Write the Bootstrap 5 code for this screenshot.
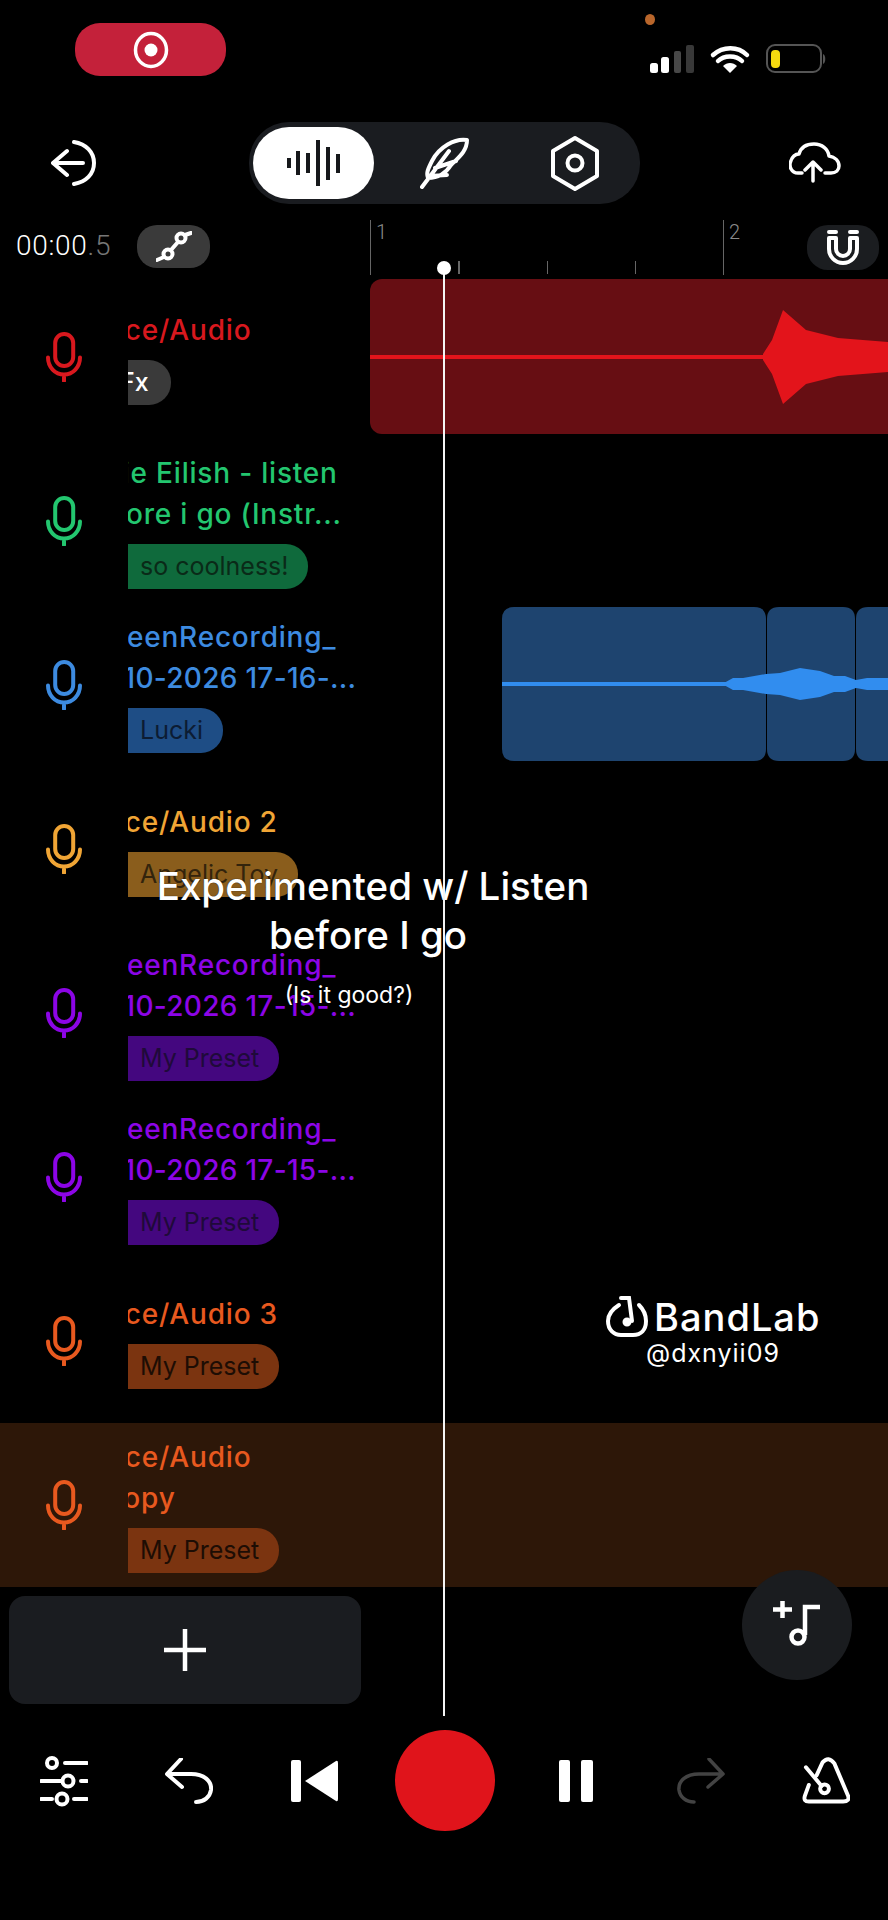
<!DOCTYPE html>
<html lang="en">
<head>
    <meta charset="UTF-8" />
    <title>BandLab Studio</title>
    <meta name="viewport" content="width=device-width, initial-scale=1" />
    <link href="https://cdn.jsdelivr.net/npm/bootstrap@5.3.0/dist/css/bootstrap.min.css" rel="stylesheet" />
    <style>
        body { background: #000; color: #fff; font-family: "Inter", "Liberation Sans", sans-serif; }
        .app { width: 888px; height: 1920px; overflow: hidden; background: #000; }
        svg { display: block; }
        .ico { fill: none; stroke: #fff; stroke-width: 4; stroke-linecap: round; stroke-linejoin: round; }

        /* status bar */
        .status-row { height: 122px; padding-left: 75px; padding-right: 61px; }
        .rec-pill { width: 151px; height: 53px; margin-top: 23px; background: #c4213a; border-radius: 25px; }
        .privacy-dot { width: 10px; height: 11px; margin-top: 14px; margin-left: -4px; background: #b9662b; border-radius: 50%; }
        .status-icons { margin-top: 19px; margin-left: 1px; }

        /* toolbar */
        .tool-row { height: 82px; padding-left: 51px; padding-right: 47px; }
        .mode-seg { width: 391px; height: 82px; margin-left: 153px; padding: 5px 4px; background: #1a1c20; border-radius: 40px; }
        .mode-on { width: 121px; height: 72px; background: #fff; border-radius: 36px; }
        .mode-b { width: 140px; }
        .mode-c { width: 122px; }

        /* ruler */
        .ruler-row { height: 71px; padding-top: 16px; }
        .time-box { width: 137px; padding-left: 16px; padding-top: 8px; font-family: "Roboto", sans-serif; font-weight: 300; font-size: 28px; line-height: 36px; letter-spacing: 0.7px; white-space: nowrap; }
        .time-dim { color: #777; }
        .round-chip { width: 73px; height: 43px; margin-top: 5px; background: #3a3a3a; border-radius: 20px; }
        .ruler { margin-left: 160px; height: 55px; }
        .tick { width: 88.25px; height: 55px; flex: none; }
        .tick-major { border-left: 1.5px solid #666; }
        .tick-minor::before { content: ""; display: block; width: 1.5px; height: 13px; margin-top: 41px; background: #666; }
        .tick-num { padding-left: 5px; font-family: "Roboto", sans-serif; font-weight: 300; font-size: 20px; line-height: 24px; color: #8a8a8a; }
        .magnet-chip { top: 225px; left: 807px; width: 72px; height: 45px; background: #1b1d20; border-radius: 21px; }

        /* tracks */
        .track-row { height: 164px; }
        .track-on { background: #2d1708; }
        .mic-col { width: 128px; flex: none; padding-left: 46px; }
        .info-col { width: 242px; flex: none; overflow: hidden; }
        .track-name { margin-left: -48px; font-size: 28px; font-weight: 500; line-height: 41px; letter-spacing: 0.8px; white-space: nowrap; }
        .name-date { letter-spacing: 0.3px; }
        .preset-chip { width: max-content; height: 45px; margin-top: 9px; margin-left: -30px; padding: 0 20px 0 42px; font-size: 25px; line-height: 45px; border-radius: 0 22px 22px 0; white-space: nowrap; }
        .chip-fx { padding-left: 22px; padding-right: 22px; background: #3a3a3a; color: #fff; font-weight: 500; }
        .lane { flex: 1 1 auto; min-width: 0; height: 100%; padding-top: 4px; }
        .clip-red { height: 155px; background: #670e13; border-radius: 12px 0 0 12px; overflow: hidden; }

        .tc-red { color: #d8181e; }
        .tc-green { color: #23c66f; }
        .tc-blue { color: #3d8be0; }
        .tc-amber { color: #f0a535; }
        .tc-purple { color: #8c05e6; }
        .tc-orange { color: #e8591f; }
        .bg-green { background: #0f6a3c; color: #0a2a18; }
        .bg-blue { background: #1e4d85; color: #0c1c33; }
        .bg-amber { background: #8a5d1c; color: #33240c; }
        .bg-purple { background: #44077f; color: #1f0a3a; }
        .bg-orange { background: #7b3410; color: #1d0d04; }

        /* bottom */
        .add-row { height: 117px; padding-top: 9px; padding-left: 9px; }
        .add-track { width: 352px; height: 108px; background: #1a1c20; border-radius: 16px; }
        .fab { top: 1570px; left: 742px; width: 110px; height: 110px; background: #1a1c1f; border-radius: 50%; }
        .transport { display: grid; grid-template-columns: 126px 123px 128px 133px 129px 122px 127px; padding-left: 1px; padding-top: 26px; align-items: center; justify-items: center; }
        .rec-btn { width: 100px; height: 101px; background: #e0141b; border-radius: 50%; }

        /* over the content */
        .playhead { top: 268px; left: 442.5px; width: 2.5px; height: 1448px; background: #f4f4f4; }
        .play-knob { top: 261px; left: 437px; width: 14px; height: 14px; background: #fff; border-radius: 50%; }
        .caption { top: 862px; left: 130px; width: 486px; text-align: center; text-shadow: 0 0 1px #000; }
        .caption-big { font-size: 38.5px; font-weight: 500; line-height: 49px; }
        .caption-line2 { margin-left: -10px; }
        .caption-sub { width: 300px; margin: 20px 0 0 69px; font-size: 23px; line-height: 30px; }
        .wm { top: 1296px; left: 606px; }
        .wm-name { margin-left: 6px; font-size: 38px; font-weight: 500; line-height: 42px; letter-spacing: 1px; }
        .wm-user { margin-left: 40px; font-size: 25px; line-height: 30px; letter-spacing: 1px; }
    </style>
</head>
<body>

<svg width="0" height="0" class="position-absolute">
    <symbol id="mic" viewBox="0 0 36 50">
        <rect x="9.2" y="2" width="18" height="32" rx="9" fill="none" stroke="currentColor" stroke-width="4" />
        <path d="M2 25.500C2 35 9 42.500 18 42.500S34 35 34 25.500M18 42.500V49" fill="none" stroke="currentColor" stroke-width="4" stroke-linecap="round" />
    </symbol>
</svg>

<div class="app position-relative">

    <!-- barra de estado -->
    <div class="status-row d-flex">
        <div class="rec-pill d-flex align-items-center justify-content-center">
            <svg width="36" height="38" viewBox="0 0 36 38"><ellipse cx="18" cy="19" rx="15.500" ry="16.500" fill="none" stroke="#fff" stroke-width="3.500" /><circle cx="18" cy="19" r="6.500" fill="#fff" /></svg>
        </div>
        <div class="ms-auto">
            <div class="privacy-dot"></div>
            <div class="status-icons d-flex align-items-end">
                <svg width="177" height="30" viewBox="650 43 177 30">
                    <rect x="650" y="62" width="8" height="10" rx="2.500" fill="#fff" />
                    <rect x="661" y="56" width="8" height="16" rx="2.500" fill="#fff" />
                    <rect x="674" y="50" width="7" height="22" rx="2" fill="#484848" />
                    <rect x="686" y="44" width="8" height="28" rx="2" fill="#383838" />
                    <path d="M713 54C723 45 738 45 747 54M718 60C724 54 736 54 742 60" fill="none" stroke="#fff" stroke-width="4.500" stroke-linecap="round" />
                    <path d="M723 65C727 61 733 61 737 65L730 72Z" fill="#fff" />
                    <rect x="767" y="44" width="54" height="27" rx="8" fill="none" stroke="#555" stroke-width="2" />
                    <rect x="771" y="49" width="9" height="18" rx="4" fill="#f5d90f" />
                    <path d="M823 53C826 54 826 62 823 63Z" fill="#555" />
                </svg>
            </div>
        </div>
    </div>

    <!-- barra de modos -->
    <div class="tool-row d-flex align-items-center">
        <svg class="ico" width="45" height="46" viewBox="51 140 45 46">
            <path d="M74 142C86 144 94 152 94 163S86 182 74 184M83 163H53M67 151L53 163L67 175" />
        </svg>
        <div class="mode-seg d-flex align-items-center">
            <div class="mode-on d-flex align-items-center justify-content-center">
                <svg width="54" height="48" viewBox="287 139 54 48" fill="none" stroke="#16181b" stroke-width="4">
                    <path d="M289 158V168M298 151V175M308 153V173M318 140V186M328 147V180M338 154V173" />
                </svg>
            </div>
            <div class="mode-b d-flex justify-content-center">
                <svg class="ico" width="49" height="52" viewBox="419 136 49 52">
                    <path d="M466 139C454 137 438 146 431 160C427 168 425 172 427 177C437 177 445 172 450 164C458 156 466 150 466 139ZM421 186L448 150M428 175L446 174M434 167L455 160" />
                </svg>
            </div>
            <div class="mode-c d-flex justify-content-center">
                <svg class="ico" width="48" height="56" viewBox="551 135 48 56">
                    <path d="M575 138L597 151V176L575 189L553 176V151Z" /><circle cx="575" cy="163" r="7.500" />
                </svg>
            </div>
        </div>
        <svg class="ico ms-auto" width="52" height="42" viewBox="790 142 52 42">
            <path d="M803 173H799C792 173 790 166 791.500 162C793 157 796 154 800 154C802 147 808 144 815 144C823 144 829 149 830 156C836 157 840 161 840 166C840 170 837 173 832 173H826M814 181V162M806 170L814 162L822 170" stroke-width="3.500" />
        </svg>
    </div>

    <!-- tiempo y regla -->
    <div class="ruler-row d-flex">
        <div class="time-box">00:00<span class="time-dim">.5</span></div>
        <div class="round-chip d-flex align-items-center justify-content-center">
            <svg class="ico" width="36" height="31" viewBox="155 232 36 31" stroke-width="2.800">
                <circle cx="167" cy="255" r="4.500" /><circle cx="180" cy="239" r="4.500" /><path d="M156 261L163 258M170 251L177 243M184 236L190 234" />
            </svg>
        </div>
        <div class="ruler d-flex">
            <div class="tick tick-major"><div class="tick-num">1</div></div>
            <div class="tick tick-minor"></div>
            <div class="tick tick-minor"></div>
            <div class="tick tick-minor"></div>
            <div class="tick tick-major"><div class="tick-num">2</div></div>
        </div>
    </div>

    <!-- pistas -->
    <div>
        <div class="track-row d-flex align-items-center tc-red">
            <div class="mic-col"><svg width="36" height="50"><use href="#mic" /></svg></div>
            <div class="info-col">
                <div class="track-name">Voice/Audio</div>
                <div class="preset-chip chip-fx">Fx</div>
            </div>
            <div class="lane">
                <div class="clip-red">
                    <svg width="518" height="155" viewBox="370 279 518 155">
                        <rect x="370" y="355" width="396" height="4" fill="#e3141b" />
                        <path d="M763 354L772 340L783 310L806 330L838 338L888 342V372L838 376L806 384L783 404L772 374L763 360Z" fill="#e3141b" />
                    </svg>
                </div>
            </div>
        </div>

        <div class="track-row d-flex align-items-center tc-green">
            <div class="mic-col"><svg width="36" height="50"><use href="#mic" /></svg></div>
            <div class="info-col">
                <div class="track-name">Billie Eilish - listen<br>before i go (Instr...</div>
                <div class="preset-chip bg-green">so coolness!</div>
            </div>
            <div class="lane"></div>
        </div>

        <div class="track-row d-flex align-items-center tc-blue">
            <div class="mic-col"><svg width="36" height="50"><use href="#mic" /></svg></div>
            <div class="info-col">
                <div class="track-name">ScreenRecording_<br><span class="name-date">01-10-2026 17-16-...</span></div>
                <div class="preset-chip bg-blue">Lucki</div>
            </div>
            <div class="lane">
                <svg width="518" height="155" viewBox="371 607 518 155">
                    <path d="M515 607H755Q767 607 767 619V749Q767 761 755 761H515Q503 761 503 749V619Q503 607 515 607Z" fill="#1e446f" />
                    <path d="M780 607H844Q856 607 856 619V749Q856 761 844 761H780Q768 761 768 749V619Q768 607 780 607Z" fill="#1e446f" />
                    <path d="M869 607H889V761H869Q857 761 857 749V619Q857 607 869 607Z" fill="#1e446f" />
                    <rect x="503" y="682" width="224" height="4" fill="#318def" />
                    <path d="M725 683L734 678L744 678L767 674L781 673L801 668L821 671L835 676L846 676L857 680L868 678L889 678V690L868 690L857 688L846 692L835 692L821 697L801 700L781 695L767 694L744 690L734 690L725 685Z" fill="#318def" />
                </svg>
            </div>
        </div>

        <div class="track-row d-flex align-items-center tc-amber">
            <div class="mic-col"><svg width="36" height="50"><use href="#mic" /></svg></div>
            <div class="info-col">
                <div class="track-name">Voice/Audio 2</div>
                <div class="preset-chip bg-amber">Angelic Toy</div>
            </div>
            <div class="lane"></div>
        </div>

        <div class="track-row d-flex align-items-center tc-purple">
            <div class="mic-col"><svg width="36" height="50"><use href="#mic" /></svg></div>
            <div class="info-col">
                <div class="track-name">ScreenRecording_<br><span class="name-date">01-10-2026 17-15-...</span></div>
                <div class="preset-chip bg-purple">My Preset</div>
            </div>
            <div class="lane"></div>
        </div>

        <div class="track-row d-flex align-items-center tc-purple">
            <div class="mic-col"><svg width="36" height="50"><use href="#mic" /></svg></div>
            <div class="info-col">
                <div class="track-name">ScreenRecording_<br><span class="name-date">01-10-2026 17-15-...</span></div>
                <div class="preset-chip bg-purple">My Preset</div>
            </div>
            <div class="lane"></div>
        </div>

        <div class="track-row d-flex align-items-center tc-orange">
            <div class="mic-col"><svg width="36" height="50"><use href="#mic" /></svg></div>
            <div class="info-col">
                <div class="track-name">Voice/Audio 3</div>
                <div class="preset-chip bg-orange">My Preset</div>
            </div>
            <div class="lane"></div>
        </div>

        <div class="track-row track-on d-flex align-items-center tc-orange">
            <div class="mic-col"><svg width="36" height="50"><use href="#mic" /></svg></div>
            <div class="info-col">
                <div class="track-name">Voice/Audio<br>- Copy</div>
                <div class="preset-chip bg-orange">My Preset</div>
            </div>
            <div class="lane"></div>
        </div>
    </div>

    <div class="add-row">
        <div class="add-track d-flex align-items-center justify-content-center">
            <svg width="42" height="42" viewBox="0 0 42 42" fill="none" stroke="#fff" stroke-width="4.500"><path d="M21 0V42M0 21H42" /></svg>
        </div>
    </div>

    <!-- transporte -->
    <div class="transport">
        <svg class="ico" width="48" height="52" viewBox="40 1754 48 52">
            <path d="M65 1762H87M41 1780H61M81 1780H87M41 1798H52M74 1798H87" />
            <circle cx="52" cy="1762" r="5" fill="#000" /><circle cx="68" cy="1780" r="5.500" fill="#000" /><circle cx="62" cy="1798" r="5.500" fill="#000" />
        </svg>
        <svg class="ico" width="48" height="46" viewBox="164 1758 48 46" stroke-width="3.500">
            <path d="M180 1759L166 1774L181 1787M167 1774H190C203 1774 211 1781 210 1790C209 1797 203 1802 195 1802" />
        </svg>
        <svg width="47" height="42" viewBox="290 1759 47 42" fill="#fff">
            <rect x="290" y="1759" width="10" height="42" rx="2" />
            <path d="M304 1780L335 1760Q337 1759 337 1762V1798Q337 1801 335 1800Z" />
        </svg>
        <div class="rec-btn"></div>
        <svg width="34" height="42" viewBox="558 1759 34 42" fill="#fff">
            <rect x="558" y="1759" width="11" height="42" rx="2" /><rect x="580" y="1759" width="12" height="42" rx="2" />
        </svg>
        <svg width="48" height="46" viewBox="676 1758 48 46" fill="none" stroke="#434343" stroke-width="3.500" stroke-linecap="round" stroke-linejoin="round">
            <path d="M708 1759L722 1774L707 1787M721 1774H698C685 1774 677 1781 678 1790C679 1797 685 1802 693 1802" />
        </svg>
        <svg class="ico" width="48" height="48" viewBox="800 1757 49 48" stroke-width="3.500">
            <path d="M807 1785L803 1796Q801 1802 807 1802H842Q849 1802 847 1796L833 1763Q827 1755 821 1762L815 1775M804 1767L820 1786" />
            <circle cx="823" cy="1789" r="4.500" />
        </svg>
    </div>

    <!-- encima del contenido -->
    <div class="magnet-chip position-absolute d-flex align-items-center justify-content-center">
        <svg class="ico" width="32" height="36" viewBox="827 231 32 36" stroke-width="3" stroke-linecap="butt">
            <path d="M829 239V250A14 14 0 0 0 857 250V239H850V250A7 7 0 0 1 836 250V239ZM829 233H836M850 233H857" />
        </svg>
    </div>
    <div class="fab position-absolute d-flex align-items-center justify-content-center">
        <svg width="50" height="50" viewBox="772 1602 50 50" fill="none" stroke="#fff" stroke-width="4.500">
            <path d="M773 1611.500H792M782.500 1603V1620M805 1637V1609H820" /><circle cx="798" cy="1639" r="6.500" />
        </svg>
    </div>
    <div class="wm position-absolute">
        <div class="d-flex align-items-end">
            <svg width="42" height="42" viewBox="605 1296 42 42" fill="none" stroke="#fff" stroke-width="4" stroke-linecap="round">
                <path d="M618 1305C610 1310 607 1316 607 1321C607 1330 613 1335 620 1335H632C640 1335 645 1330 645 1321C645 1316 643 1310 638 1305" />
                <path d="M620 1298H628L631 1321" /><circle cx="626" cy="1322" r="3.500" fill="#fff" stroke-width="2" />
            </svg>
            <div class="wm-name">BandLab</div>
        </div>
        <div class="wm-user">@dxnyii09</div>
    </div>
    <div class="caption position-absolute">
        <div class="caption-big">Experimented w/ Listen<div class="caption-line2">before I go</div></div>
        <div class="caption-sub">(Is it good?)</div>
    </div>
    <div class="playhead position-absolute"></div>
    <div class="play-knob position-absolute"></div>

</div>

<script src="https://cdn.jsdelivr.net/npm/bootstrap@5.3.0/dist/js/bootstrap.bundle.min.js"></script>
</body>
</html>
